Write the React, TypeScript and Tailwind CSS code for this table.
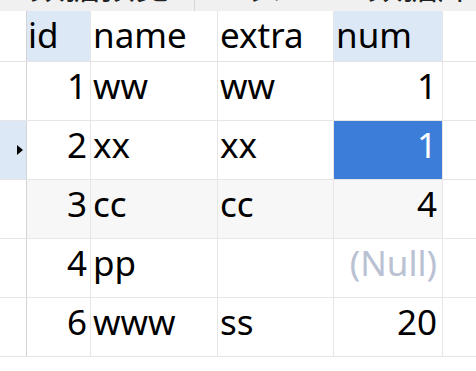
import React from 'react';

type Row = { id: number; name: string; extra: string; num: number | null };

const rows: Row[] = [
  { id: 1, name: 'ww', extra: 'ww', num: 1 },
  { id: 2, name: 'xx', extra: 'xx', num: 1 },
  { id: 3, name: 'cc', extra: 'cc', num: 4 },
  { id: 4, name: 'pp', extra: '', num: null },
  { id: 6, name: 'www', extra: 'ss', num: 20 },
];

const cell = 'h-full shrink-0 border-r border-[#e6e6e6] leading-[48px] whitespace-nowrap overflow-hidden';

const App: React.FC = () => {
  const selectedRow = 1;
  const hoverRow = 2;

  return (
    <div className="w-[476px] h-[371px] bg-white overflow-hidden text-black font-['Noto_Sans','Noto_Sans_CJK_SC',sans-serif] text-[35px]">
      {/* Tab strip (cut off at top) */}
      <div className="h-[11px] bg-[#f0f0f0] flex overflow-hidden">
        <div className="w-[195px] shrink-0 border-r border-[#d6d6d6] pl-[30px] overflow-hidden">
          <div className="-mt-[36px] leading-[40px] text-[#222] font-['Noto_Sans_CJK_SC',sans-serif]">数据预览</div>
        </div>
        <div className="flex-1 pl-[50px] overflow-hidden">
          <div className="-mt-[36px] leading-[40px] text-[#222] whitespace-nowrap font-['Noto_Sans_CJK_SC',sans-serif]">
            表 <span className="ml-[80px]">数据库</span>
          </div>
        </div>
      </div>

      {/* Header */}
      <div className="flex h-[51px] border-b border-[#e3e3e3]">
        <div className="w-[27px] h-full shrink-0 border-r border-[#d4d4d4]" />
        <div className={`${cell} w-[64px] bg-[#dde8f6] pl-[1px]`}>id</div>
        <div className={`${cell} w-[127px] pl-[2px]`}>name</div>
        <div className={`${cell} w-[116px] pl-[2px]`}>extra</div>
        <div className={`${cell} w-[109px] bg-[#dde8f6] pl-[2px]`}>num</div>
      </div>

      {/* Rows */}
      {rows.map((row, index) => {
        const isSelected = index === selectedRow;
        const shade = index === hoverRow ? 'bg-[#f7f7f7]' : '';
        return (
          <div key={row.id} className="flex h-[59px] border-b border-[#e6e6e6]">
            <div
              className={`w-[27px] h-full shrink-0 border-r border-[#d4d4d4] flex items-center justify-end pr-[3px] ${
                isSelected ? 'bg-[#dde8f6]' : ''
              }`}
            >
              {isSelected && (
                <svg width="6" height="10" viewBox="0 0 6 10">
                  <path d="M0 0 L6 5 L0 10 Z" fill="#000" />
                </svg>
              )}
            </div>
            <div className={`${cell} w-[64px] text-right pr-[3px] ${shade}`}>{row.id}</div>
            <div className={`${cell} w-[127px] pl-[2px] ${shade}`}>{row.name}</div>
            <div className={`${cell} w-[116px] pl-[2px] ${shade}`}>{row.extra}</div>
            <div
              className={`${cell} w-[109px] text-right pr-[5px] ${
                isSelected ? 'bg-[#3b7dd8] text-white' : shade
              } ${row.num === null ? 'text-[#b9c1d3]' : ''}`}
            >
              {row.num === null ? '(Null)' : row.num}
            </div>
          </div>
        );
      })}
    </div>
  );
};

export default App;
